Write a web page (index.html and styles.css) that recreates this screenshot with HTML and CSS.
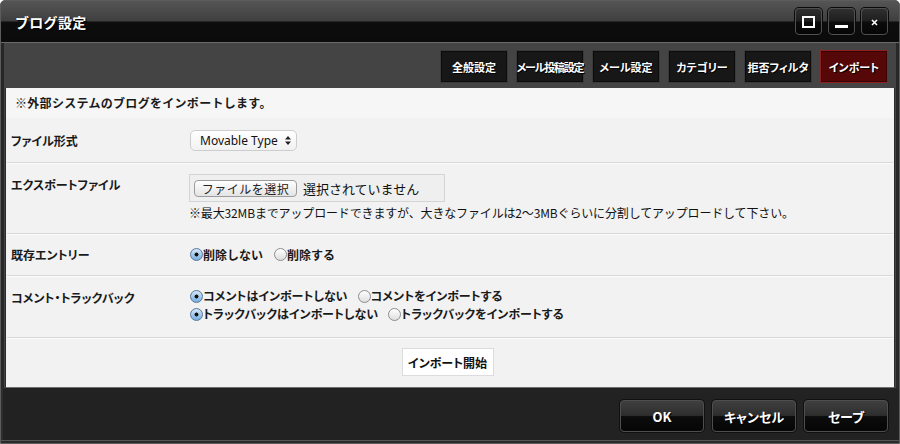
FILE: index.html
```html
<!DOCTYPE html>
<html lang="ja">
<head>
<meta charset="utf-8">
<title>ブログ設定</title>
<link rel="stylesheet" href="styles.css">
</head>
<body>
<div class="window">
  <header class="titlebar">
    <h1 class="title">ブログ設定</h1>
    <div class="win-btns">
      <span class="win-btn"><svg width="13" height="12" viewBox="0 0 13 12"><rect x="1" y="1" width="11" height="10" fill="none" stroke="#fff" stroke-width="2"/></svg></span>
      <span class="win-btn win-min"><svg width="13" height="3" viewBox="0 0 13 3"><rect x="0" y="0" width="13" height="3" fill="#fff"/></svg></span>
      <span class="win-btn"><svg width="7" height="7" viewBox="0 0 7 7"><path d="M1 1L6 6M6 1L1 6" stroke="#fff" stroke-width="1.6"/></svg></span>
    </div>
  </header>
  <div class="main">
    <nav class="tabs">
      <span class="tab">全般設定</span>
      <span class="tab tab-tight">メール投稿設定</span>
      <span class="tab">メール設定</span>
      <span class="tab">カテゴリー</span>
      <span class="tab">拒否フィルタ</span>
      <span class="tab tab-active">インポート</span>
    </nav>
    <section class="panel">
      <p class="intro">※外部システムのブログをインポートします。</p>
      <div class="row row-format">
        <div class="label">ファイル形式</div>
        <div class="value">
          <span class="select">Movable Type<svg class="select-arrows" width="6" height="9" viewBox="0 0 6 9"><path d="M3 0L6 3.5H0Z M3 9L6 5.5H0Z" fill="#222"/></svg></span>
        </div>
      </div>
      <div class="row row-file">
        <div class="label">エクスポートファイル</div>
        <div class="value">
          <div class="filebox"><span class="filebtn">ファイルを選択</span><span class="filetext">選択されていません</span></div>
          <p class="note">※最大32MBまでアップロードできますが、大きなファイルは2〜3MBぐらいに分割してアップロードして下さい。</p>
        </div>
      </div>
      <div class="row row-entry">
        <div class="label">既存エントリー</div>
        <div class="value">
          <div class="radio-line">
            <span class="radio"><span class="dot checked"></span>削除しない</span>
            <span class="radio"><span class="dot"></span>削除する</span>
          </div>
        </div>
      </div>
      <div class="row row-comment">
        <div class="label">コメント・トラックバック</div>
        <div class="value">
          <div class="radio-line">
            <span class="radio"><span class="dot checked"></span>コメントはインポートしない</span>
            <span class="radio"><span class="dot"></span>コメントをインポートする</span>
          </div>
          <div class="radio-line">
            <span class="radio"><span class="dot checked"></span>トラックバックはインポートしない</span>
            <span class="radio"><span class="dot"></span>トラックバックをインポートする</span>
          </div>
        </div>
      </div>
      <div class="row row-action">
        <span class="start-btn">インポート開始</span>
      </div>
    </section>
  </div>
  <footer class="footer">
    <span class="fbtn">OK</span>
    <span class="fbtn">キャンセル</span>
    <span class="fbtn">セーブ</span>
  </footer>
</div>
</body>
</html>
```
FILE: styles.css
```css
html, body {
  margin: 0;
  padding: 0;
  background: #ffffff;
}

.window {
  width: 900px;
  height: 444px;
  box-sizing: border-box;
  border: 1px solid #5c5c5c;
  border-radius: 5px 5px 0 0;
  background: #2a2a2a;
  display: flex;
  flex-direction: column;
  overflow: hidden;
  font-family: "Noto Sans CJK JP", "Noto Sans", sans-serif;
  color: #1a1a1a;
}

/* title bar */
.titlebar {
  flex: none;
  height: 42px;
  box-sizing: border-box;
  border-bottom: 1px solid #6a6a6a;
  background: linear-gradient(#555555 0, #3f3f3f 20px, #0d0d0d 21px, #0b0b0b 100%);
  display: flex;
  align-items: center;
  justify-content: space-between;
  padding: 0 11px 0 14px;
}

.title {
  margin: 0;
  font-size: 14px;
  font-weight: 700;
  color: #ffffff;
  text-shadow: 1px 1px 1px #000;
  letter-spacing: 0.3px;
}

.win-btns {
  display: flex;
  gap: 6px;
  margin-top: -1px;
}

.win-btn {
  width: 27px;
  height: 27px;
  box-sizing: border-box;
  border: 1px solid #505050;
  border-radius: 4px;
  background: linear-gradient(#2f2f2f 0, #1f1f1f 48%, #0c0c0c 52%, #060606 100%);
  box-shadow: 0 0 0 1px #0a0a0a;
  display: flex;
  align-items: center;
  justify-content: center;
}

.win-btn svg {
  display: block;
  margin-top: 2px;
}

.win-min {
  align-items: flex-end;
  padding-bottom: 6px;
}

/* main */
.main {
  flex: none;
  height: 345px;
  box-sizing: border-box;
  display: flex;
  flex-direction: column;
  background: #444444;
  padding: 0 4px;
  box-shadow: inset 3px 0 #272727, inset -3px 0 #272727;
}

.tabs {
  flex: none;
  height: 45px;
  box-sizing: border-box;
  display: flex;
  justify-content: flex-end;
  align-items: flex-start;
  gap: 8px;
  padding: 7px 7px 0 0;
}

.tab {
  width: 68px;
  height: 33px;
  box-sizing: border-box;
  border: 1px solid #3a3a3a;
  background: #171717;
  box-shadow: inset 0 0 0 1px #0c0c0c;
  color: #ffffff;
  font-size: 11px;
  font-weight: 700;
  font-feature-settings: "palt";
  display: flex;
  align-items: center;
  justify-content: center;
  text-shadow: 1px 1px 0 #000;
  white-space: nowrap;
}

.tab-tight {
  letter-spacing: -1.2px;
}

.tab-active {
  background: #560707;
  border-color: #8e2020;
  box-shadow: inset 0 0 0 1px #3a0404;
}

.panel {
  flex: 1;
  display: flex;
  flex-direction: column;
  background: #f2f2f2;
  border: 1px solid #2a2a2a;
  border-top: 0;
  border-bottom: 1px solid #6e6e6e;
}

.intro {
  flex: none;
  margin: 0;
  height: 30px;
  line-height: 30px;
  padding-left: 9px;
  background: #f6f6f6;
  font-size: 12px;
  font-weight: 700;
  letter-spacing: 0.3px;
}

.row {
  flex: none;
  display: flex;
  align-items: flex-start;
  box-sizing: border-box;
  padding: 11px 0 0 4px;
  border-top: 1px solid #d8d8d8;
  box-shadow: inset 0 1px #fbfbfb;
  margin: 0 1px;
}

.row-format {
  height: 44px;
  border-top: 0;
  box-shadow: none;
  padding-top: 12px;
}

.row-file { height: 71px; }
.row-entry { height: 42px; padding-top: 10px; }
.row-comment { height: 62px; }

.row-action {
  flex: 1;
  justify-content: center;
  padding: 10px 0 0;
}

.label {
  flex: none;
  width: 179px;
  line-height: 21px;
  font-size: 12px;
  font-weight: 700;
  font-feature-settings: "palt";
}

.value {
  display: flex;
  flex-direction: column;
  font-size: 12px;
}

.select {
  width: 107px;
  height: 21px;
  box-sizing: border-box;
  border: 1px solid #cdcdcd;
  border-radius: 5px;
  background: linear-gradient(#ffffff, #f1f1f1);
  display: flex;
  align-items: center;
  padding: 0 5px 0 9px;
  font-family: "Noto Sans", sans-serif;
  font-size: 12px;
  color: #111;
  justify-content: space-between;
}

.select-arrows {
  display: block;
}

.filebox {
  width: 256px;
  height: 28px;
  box-sizing: border-box;
  border: 1px solid #d4d4d4;
  background: #efefef;
  display: flex;
  align-items: center;
  padding-left: 4px;
  margin-left: -1px;
}

.filebtn {
  width: 103px;
  height: 17px;
  box-sizing: border-box;
  border: 1px solid #9c9c9c;
  border-radius: 4px;
  background: linear-gradient(#ffffff, #e4e4e4);
  font-size: 12px;
  line-height: 15px;
  text-align: center;
  letter-spacing: 0.5px;
  color: #222;
}

.filetext {
  margin-left: 6px;
  font-size: 13px;
  color: #111;
}

.note {
  margin: 2px 0 0 -1px;
  line-height: 18px;
  font-size: 12px;
  letter-spacing: -0.15px;
  color: #111;
  white-space: nowrap;
}

.radio-line {
  display: flex;
  line-height: 18px;
}

.row-entry .radio-line {
  line-height: 21px;
}

.radio {
  display: inline-flex;
  align-items: center;
  margin-right: 10px;
  font-size: 12px;
  font-weight: 700;
  font-feature-settings: "palt";
  white-space: nowrap;
}

.row-entry .radio {
  font-feature-settings: normal;
  margin-right: 11px;
}

.dot {
  width: 13px;
  height: 13px;
  box-sizing: border-box;
  border-radius: 50%;
  border: 1px solid #8c8c8c;
  background: linear-gradient(#ffffff, #dedede);
  margin-right: 0;
  flex: none;
}

.dot.checked {
  border-color: #55789c;
  background: radial-gradient(circle, #111 0, #111 1.7px, transparent 2.3px), linear-gradient(#d6e8f8, #76aee0);
}

.start-btn {
  width: 92px;
  height: 28px;
  box-sizing: border-box;
  border: 1px solid #dcdcdc;
  background: #ffffff;
  display: flex;
  align-items: center;
  justify-content: center;
  font-size: 12px;
  font-weight: 700;
  font-feature-settings: "palt";
  color: #111;
  margin-left: -5px;
}

/* footer */
.footer {
  flex: none;
  height: 53px;
  box-sizing: border-box;
  background: #222222;
  border-bottom: 1px solid #555555;
  display: flex;
  justify-content: flex-end;
  align-items: flex-start;
  gap: 8px;
  padding: 12px 11px 0 0;
  box-shadow: inset 2px 0 #2e2e2e;
}

.fbtn {
  width: 84px;
  height: 32px;
  box-sizing: border-box;
  border: 1px solid #4e4e4e;
  border-radius: 4px;
  background: linear-gradient(#3f3f3f 0, #2e2e2e 48%, #0c0c0c 52%, #060606 100%);
  box-shadow: 0 0 0 1px #111;
  display: flex;
  align-items: center;
  justify-content: center;
  color: #ffffff;
  font-size: 13px;
  font-weight: 700;
  font-feature-settings: "palt";
  text-shadow: 1px 1px 0 #000;
}
```
